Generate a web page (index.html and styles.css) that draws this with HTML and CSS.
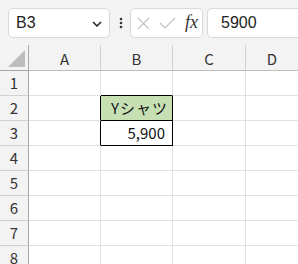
FILE: index.html
```html
<!DOCTYPE html>
<html lang="ja">
<head>
<meta charset="utf-8">
<link rel="stylesheet" href="styles.css">
</head>
<body>
<div class="bar">
  <div class="namebox">
    <span class="name">B3</span>
    <svg class="chev" width="10" height="6" viewBox="0 0 10 6"><path d="M1 1 L5 5 L9 1" fill="none" stroke="#222" stroke-width="1.5"/></svg>
  </div>
  <svg class="dots" width="4" height="12" viewBox="0 0 4 12"><circle cx="2" cy="2" r="1.3" fill="#333"/><circle cx="2" cy="6" r="1.3" fill="#333"/><circle cx="2" cy="10" r="1.3" fill="#333"/></svg>
  <div class="fbtns">
    <svg width="13" height="13" viewBox="0 0 13 13"><path d="M1 1 L12 12 M12 1 L1 12" stroke="#c4c4c4" stroke-width="1.2" fill="none"/></svg>
    <svg width="17" height="12" viewBox="0 0 17 12"><path d="M1 6 L6 11 L16 1" stroke="#c4c4c4" stroke-width="1.2" fill="none"/></svg>
    <span class="fx">fx</span>
  </div>
  <div class="formula">5900</div>
</div>
<div class="grid">
  <div class="corner"><span class="tri"></span></div>
  <div class="ch">A</div>
  <div class="ch">B</div>
  <div class="ch">C</div>
  <div class="ch last">D</div>

  <div class="rh">1</div><div class="c"></div><div class="c bb"></div><div class="c"></div><div class="c last"></div>
  <div class="rh">2</div><div class="c br"></div><div class="c head bb br">Yシャツ</div><div class="c"></div><div class="c last"></div>
  <div class="rh">3</div><div class="c br"></div><div class="c num bb br">5,900</div><div class="c"></div><div class="c last"></div>
  <div class="rh">4</div><div class="c"></div><div class="c"></div><div class="c"></div><div class="c last"></div>
  <div class="rh">5</div><div class="c"></div><div class="c"></div><div class="c"></div><div class="c last"></div>
  <div class="rh">6</div><div class="c"></div><div class="c"></div><div class="c"></div><div class="c last"></div>
  <div class="rh">7</div><div class="c"></div><div class="c"></div><div class="c"></div><div class="c last"></div>
  <div class="rh">8</div><div class="c"></div><div class="c"></div><div class="c"></div><div class="c last"></div>
</div>
</body>
</html>
```
FILE: styles.css
```css
html, body {
  margin: 0;
  padding: 0;
  background: #ffffff;
  overflow: hidden;
}
body {
  width: 298px;
  height: 264px;
  font-family: "Noto Sans CJK JP", "Noto Sans", sans-serif;
  color: #222;
}
.bar {
  height: 45px;
  box-sizing: border-box;
  background: #f3f3f3;
  display: flex;
  align-items: flex-start;
  padding: 8px 0 0 8px;
}
.namebox {
  width: 102px;
  height: 30px;
  box-sizing: border-box;
  background: #fff;
  border: 1px solid #d9d9d9;
  border-radius: 5px;
  display: flex;
  align-items: center;
  justify-content: space-between;
  padding: 0 7px 0 7px;
}
.name {
  font-family: "Liberation Sans", sans-serif;
  font-size: 16px;
  color: #222;
}
.chev {
  margin-top: 1px;
}
.dots {
  margin: 9px 0 0 9px;
}
.fbtns {
  margin-left: 7px;
  width: 73px;
  height: 30px;
  box-sizing: border-box;
  background: #fff;
  border: 1px solid #d9d9d9;
  border-radius: 5px;
  display: flex;
  align-items: center;
  padding: 0 4px 0 6px;
  gap: 9px;
}
.fx {
  font-family: "Liberation Serif", serif;
  font-style: italic;
  font-size: 18px;
  color: #333;
  margin-left: 0;
  margin-top: -2px;
}
.formula {
  margin-left: 4px;
  flex: 1;
  height: 30px;
  box-sizing: border-box;
  background: #fff;
  border: 1px solid #d9d9d9;
  border-right: none;
  border-radius: 5px 0 0 5px;
  font-family: "Liberation Sans", sans-serif;
  font-size: 16px;
  color: #222;
  padding-left: 13px;
  line-height: 28px;
}
.grid {
  display: grid;
  grid-template-columns: 29px 72px 72px 73px 1fr;
  grid-template-rows: 26px repeat(8, 25px);
}
.grid > div {
  box-sizing: border-box;
}
.corner {
  background: #f3f3f3;
  border-right: 1px solid #a6a6a6;
  border-bottom: 1px solid #a6a6a6;
  position: relative;
}
.tri {
  position: absolute;
  right: 3px;
  bottom: 3px;
  width: 0;
  height: 0;
  border-left: 17px solid transparent;
  border-bottom: 17px solid #bdbdbd;
}
.ch {
  background: #f3f3f3;
  border-right: 1px solid #d0d0d0;
  border-bottom: 1px solid #bdbdbd;
  text-align: center;
  font-size: 15px;
  line-height: 25px;
  color: #333;
  padding-top: 1px;
}
.rh {
  background: #f3f3f3;
  border-right: 1px solid #a6a6a6;
  border-bottom: 1px solid #d0d0d0;
  text-align: center;
  font-size: 15px;
  line-height: 24px;
  color: #333;
}
.c {
  border-right: 1px solid #e1e1e1;
  border-bottom: 1px solid #e1e1e1;
  font-size: 15px;
  line-height: 24px;
  color: #111;
  white-space: nowrap;
}
.last {
  border-right: none;
}
.c.bb {
  border-bottom-color: #000;
}
.c.br {
  border-right-color: #000;
}
.head {
  background: #c6e0b4;
  padding-left: 10px;
  letter-spacing: 1px;
}
.num {
  text-align: right;
  padding-right: 7px;
}
```
